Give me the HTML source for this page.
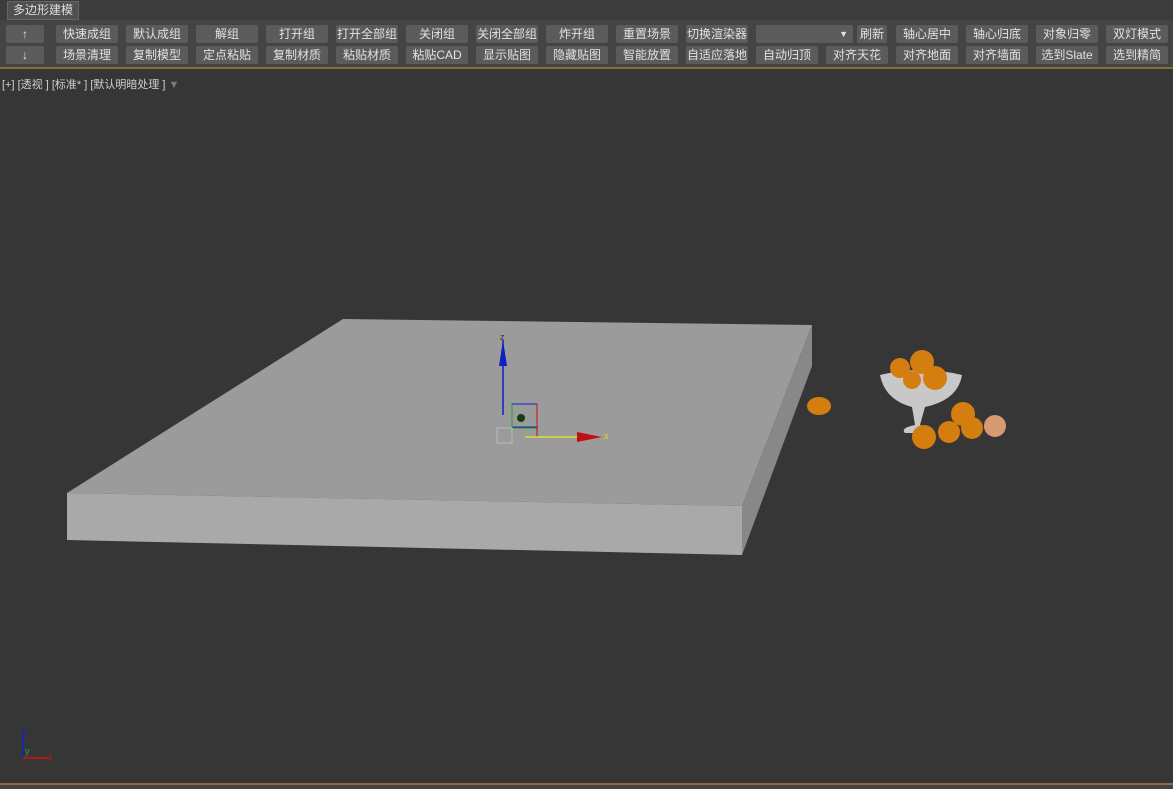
<!DOCTYPE html><html><head><meta charset="utf-8"><style>
body{margin:0;width:1173px;height:789px;background:#363636;overflow:hidden;position:relative;font-family:"Liberation Sans","Noto Sans CJK SC",sans-serif;}
.top{position:absolute;left:0;top:0;width:1173px;height:20px;background:#3c3c3c;}
.tab{position:absolute;left:7px;top:1px;height:17px;padding:0 5px;background:#505050;color:#ddd;font-size:12px;line-height:17px;border:1px solid #666;}
.tb{position:absolute;left:0;top:20px;width:1173px;height:48px;background:#444;}
.b{position:absolute;height:18px;background:#5b5b5b;color:#e2e2e2;font-size:12px;line-height:18px;text-align:center;border-radius:2px;}
.gold{position:absolute;left:0;width:1173px;height:2px;background:#8a7030;}
.lbl{position:absolute;left:2px;top:76px;color:#cfcfcf;font-size:11px;}
</style></head><body>
<div class="top"><div class="tab">多边形建模</div></div>
<div class="tb"></div>
<div id="btns"></div>
<div class="gold" style="top:67px"></div>
<div class="lbl">[+] [透视 ] [标准* ] [默认明暗处理 ] <span style="color:#777">▼</span></div>
<svg style="position:absolute;left:0;top:0" width="1173" height="789">
<polygon points="343,319 812,325 742,506 67,493" fill="#9b9b9b"/>
<polygon points="67,493 742,506 742,555 67,540" fill="#a9a9a9"/>
<polygon points="812,325 812,366 742,555 742,506" fill="#888"/>
<line x1="503" y1="340" x2="503" y2="415" stroke="#1020c0" stroke-width="1.5"/>
<polygon points="503,340 499,366 507,366" fill="#1020c0"/>
<text x="500" y="340" fill="#333" font-size="9">z</text>
<rect x="512" y="404" width="25" height="23" fill="none" stroke="#1020c0"/>
<line x1="512" y1="404" x2="512" y2="428" stroke="#20a020"/><line x1="512" y1="428" x2="538" y2="428" stroke="#20a020"/>
<line x1="537" y1="404" x2="537" y2="437" stroke="#c01010"/>
<circle cx="521" cy="418" r="4" fill="#104010"/>
<rect x="497" y="428" width="15" height="15" fill="none" stroke="#bbb"/>
<line x1="525" y1="437" x2="580" y2="437" stroke="#ff0"/>
<polygon points="577,432 577,442 602,437" fill="#c01010"/>
<text x="604" y="439" fill="#dd0" font-size="9">x</text>
<g fill="#d47e10">
<ellipse cx="819" cy="406" rx="12" ry="9"/>
</g>
<path d="M880,375 Q920,365 962,375 Q958,400 925,407 L920,425 Q935,430 926,433 L905,433 Q900,428 915,425 L912,407 Q885,400 880,375Z" fill="#c8c8c8"/>
<g fill="#d47e10">
<circle cx="900" cy="368" r="10"/><circle cx="922" cy="362" r="12"/><circle cx="935" cy="378" r="12"/><circle cx="912" cy="380" r="9"/>
<circle cx="963" cy="414" r="12"/><circle cx="972" cy="428" r="11"/><circle cx="949" cy="432" r="11"/><circle cx="924" cy="437" r="12"/>
</g>
<circle cx="995" cy="426" r="11" fill="#d89a70"/>
<line x1="23" y1="733" x2="23" y2="759" stroke="#1020d0" stroke-width="1.5"/>
<line x1="23" y1="758" x2="48" y2="758" stroke="#d01010" stroke-width="1.5"/>
<text x="21" y="734" fill="#1020d0" font-size="9">z</text>
<text x="25" y="754" fill="#20b020" font-size="9">y</text>
<text x="48" y="760" fill="#d01010" font-size="9">x</text>
</svg>
<div class="gold" style="top:783px"></div>
<div style="position:absolute;left:0;top:785px;width:1173px;height:4px;background:#444"></div>
<script>
var xs=[6,56,126,196,266,336,406,476,546,616,686];
var r1=["↑","快速成组","默认成组","解组","打开组","打开全部组","关闭组","关闭全部组","炸开组","重置场景","切换渲染器"];
var r2=["↓","场景清理","复制模型","定点粘贴","复制材质","粘贴材质","粘贴CAD","显示贴图","隐藏贴图","智能放置","自适应落地"];
var h="";
function b(x,y,w,t){h+='<div class="b" style="left:'+x+'px;top:'+y+'px;width:'+w+'px">'+t+'</div>';}
for(var i=0;i<xs.length;i++){var w=i==0?38:62;b(xs[i],25,w,r1[i]);b(xs[i],46,w,r2[i]);}
h+='<div class="b" style="left:756px;top:25px;width:97px;text-align:right;font-size:9px;">▼&nbsp;&nbsp;</div>';
b(857,25,30,"刷新");
var x3=[896,966,1036,1106],a=["轴心居中","轴心归底","对象归零","双灯模式"],c=["对齐地面","对齐墙面","选到Slate","选到精简"];
for(i=0;i<4;i++){b(x3[i],25,62,a[i]);b(x3[i],46,62,c[i]);}
b(756,46,62,"自动归顶");b(826,46,62,"对齐天花");
document.getElementById("btns").innerHTML=h;
</script>
</body></html>
